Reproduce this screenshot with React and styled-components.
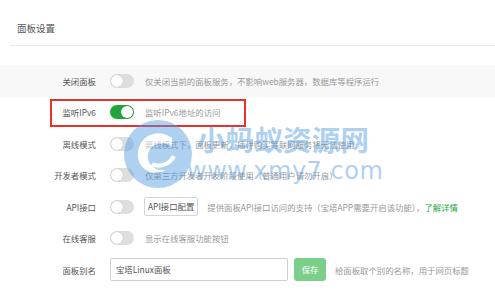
import React from 'react';
import styled, { createGlobalStyle } from 'styled-components';

const GlobalStyle = createGlobalStyle`
    html, body {
        margin: 0;
        padding: 0;
        background: #fff;
    }
    body {
        font-family: "Noto Sans CJK SC", "Noto Sans", "Liberation Sans", sans-serif;
    }
`

const Page = styled.div`
    position: relative;
    width: 495px;
    height: 305px;
    overflow: hidden;
    background: #fff;
`
const Title = styled.div`
    padding: 22px 0 0 17px;
    height: 23px;
    line-height: 12px;
    font-size: 9.5px;
    color: #555;
`
const Divider = styled.div`
    margin-left: 10px;
    border-top: 1px solid #ececec;
`
const Form = styled.div`
    padding-top: 19px;
`
const Row = styled.div`
    display: flex;
    align-items: center;
    height: 31.5px;
    background: ${p => p.hover ? '#f8f8f8' : 'transparent'};
    font-size: 8.4px;
`
const Label = styled.div`
    width: 96px;
    margin-right: 14px;
    text-align: right;
    color: #555;
    white-space: nowrap;
`
const Switch = styled.div`
    position: relative;
    width: 24px;
    height: 14px;
    border-radius: 7px;
    background: ${p => p.on ? '#20a53a' : '#dedede'};
    flex-shrink: 0;
    &::after {
        content: '';
        position: absolute;
        top: 1px;
        left: ${p => p.on ? '11px' : '1px'};
        width: 12px;
        height: 12px;
        border-radius: 50%;
        background: #fff;
        box-shadow: 0 0 1px rgba(0,0,0,0.3);
    }
`
const Desc = styled.div`
    margin-left: ${p => p.gap || 11}px;
    color: #999;
    white-space: nowrap;
`
const Link = styled.span`
    color: #20a53a;
`
const ApiButton = styled.div`
    margin-left: 10px;
    height: 17px;
    line-height: 17px;
    padding: 0 3px;
    border: 1px solid #d4d4d4;
    border-radius: 2px;
    background: #fff;
    color: #555;
    white-space: nowrap;
`
const Input = styled.div`
    box-sizing: border-box;
    width: 178px;
    height: 23px;
    line-height: 21px;
    padding-left: 5px;
    border: 1px solid #d0d0d0;
    border-radius: 2px;
    color: #555;
`
const SaveButton = styled.div`
    margin-left: 6px;
    width: 32px;
    height: 23px;
    line-height: 23px;
    text-align: center;
    border-radius: 3px;
    background: #7ccf8b;
    color: #fff;
`
// red annotation box drawn over the screenshot
const Highlight = styled.div`
    position: absolute;
    left: 50px;
    top: 99px;
    width: 192px;
    height: 24px;
    border: 2px solid #e8302d;
`
// site watermark lying over the form
const Watermark = styled.div`
    position: absolute;
    left: 122px;
    top: 118px;
    display: flex;
    align-items: center;
    pointer-events: none;
    opacity: 0.45;
`
const MarkText = styled.div`
    margin-left: 3px;
    color: #4f9ae2;
    font-weight: bold;
    line-height: 1;
`
const MarkTitle = styled.div`
    font-size: 28.5px;
    letter-spacing: 0.2px;
`
const MarkUrl = styled.div`
    margin-top: 6px;
    margin-left: -10px;
    font-family: "DejaVu Sans", sans-serif;
    font-size: 24px;
    font-weight: normal;
    letter-spacing: 0.5px;
`

const Logo = () => (
    <svg width="72" height="72" viewBox="0 0 72 72">
        <circle cx="36" cy="36" r="34" fill="#4f9ae2" />
        <path d="M50 20 C38 10 18 16 16 34 C14 50 30 60 44 52 C34 54 24 46 26 36 C28 26 40 22 50 28 Z" fill="#fff" />
        <path d="M30 46 C38 50 48 46 52 38" stroke="#fff" strokeWidth="4" fill="none" />
    </svg>
)

const rows = [
    { label: '关闭面板', desc: '仅关闭当前的面板服务，不影响web服务器，数据库等程序运行', hover: true },
    { label: '监听IPv6', desc: '监听IPv6地址的访问', on: true },
    { label: '离线模式', desc: '离线模式下，面板更新，插件购买等联网服务将无法使用' },
    { label: '开发者模式', desc: '仅第三方开发者开发阶段使用（普通用户请勿开启）' },
]

const App = () => (
    <>
        <GlobalStyle />
        <Page>
            <Title>面板设置</Title>
            <Divider />
            <Form>
                {rows.map(r => (
                    <Row key={r.label} hover={r.hover}>
                        <Label>{r.label}</Label>
                        <Switch on={r.on} />
                        <Desc>{r.desc}</Desc>
                    </Row>
                ))}
                <Row>
                    <Label>API接口</Label>
                    <Switch />
                    <ApiButton>API接口配置</ApiButton>
                    <Desc gap={9}>提供面板API接口访问的支持（宝塔APP需要开启该功能），<Link>了解详情</Link></Desc>
                </Row>
                <Row>
                    <Label>在线客服</Label>
                    <Switch />
                    <Desc>显示在线客服功能按钮</Desc>
                </Row>
                <Row>
                    <Label>面板别名</Label>
                    <Input>宝塔Linux面板</Input>
                    <SaveButton>保存</SaveButton>
                    <Desc gap={9}>给面板取个别的名称，用于网页标题</Desc>
                </Row>
            </Form>
            <Highlight />
            <Watermark>
                <Logo />
                <MarkText>
                    <MarkTitle>小蚂蚁资源网</MarkTitle>
                    <MarkUrl>www.xmy7.com</MarkUrl>
                </MarkText>
            </Watermark>
        </Page>
    </>
)

export default App;
